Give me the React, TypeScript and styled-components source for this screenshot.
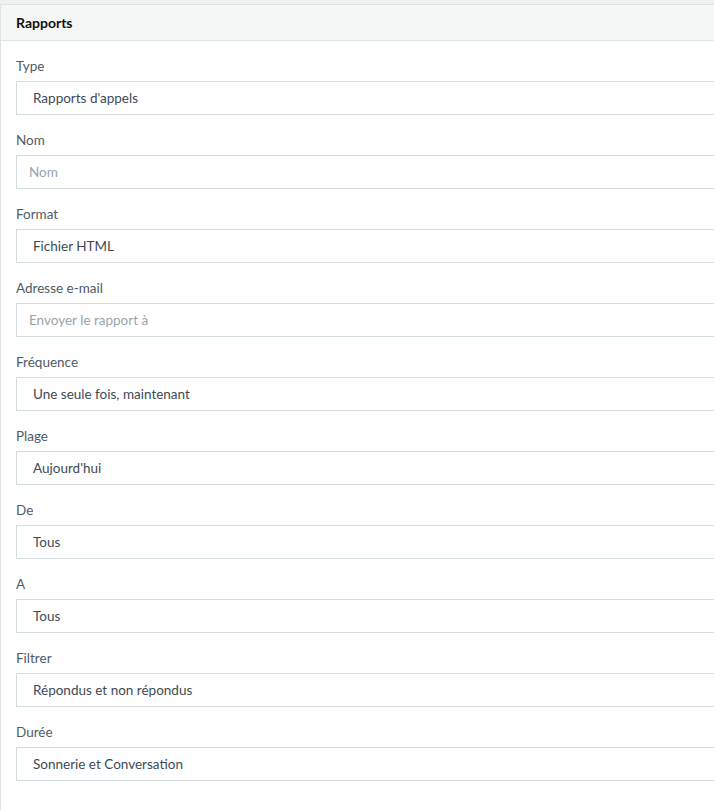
import React from "react";
import styled, { createGlobalStyle } from "styled-components";

const Global = createGlobalStyle`
  html, body { margin: 0; padding: 0; }
  body {
    background: #eef1f1;
    font-family: Lato, "Noto Sans", sans-serif;
    overflow: hidden;
  }
`;

const Page = styled.div`
  padding-top: 4px;
  width: 740px;
`;

const Panel = styled.section`
  background: #ffffff;
  border: 1px solid #dce3e3;
  border-right: none;
  min-height: 820px;
`;

const Header = styled.header`
  height: 35px;
  background: #f5f7f7;
  border-bottom: 1px solid #e0e6e6;
  display: flex;
  align-items: center;
  padding-left: 15px;
  font-size: 14px;
  font-weight: 700;
  color: #111;
`;

const Body = styled.div`
  padding: 15px 0 0 15px;
  display: flex;
  flex-direction: column;
  gap: 15px;
`;

const Field = styled.div`
  display: flex;
  flex-direction: column;
  gap: 5px;
`;

const Label = styled.label`
  font-size: 13.5px;
  line-height: 20px;
  color: #4f5b66;
`;

const Control = styled.div<{ $placeholder?: boolean }>`
  height: 34px;
  box-sizing: border-box;
  border: 1px solid #d3dcdf;
  background: #fff;
  display: flex;
  align-items: center;
  padding-left: ${(p) => (p.$placeholder ? "12px" : "16px")};
  font-size: 13.5px;
  color: ${(p) => (p.$placeholder ? "#9aa4ab" : "#3d4a55")};
`;

const fields: { label: string; value: string; placeholder?: boolean }[] = [
  { label: "Type", value: "Rapports d'appels" },
  { label: "Nom", value: "Nom", placeholder: true },
  { label: "Format", value: "Fichier HTML" },
  { label: "Adresse e-mail", value: "Envoyer le rapport à", placeholder: true },
  { label: "Fréquence", value: "Une seule fois, maintenant" },
  { label: "Plage", value: "Aujourd'hui" },
  { label: "De", value: "Tous" },
  { label: "A", value: "Tous" },
  { label: "Filtrer", value: "Répondus et non répondus" },
  { label: "Durée", value: "Sonnerie et Conversation" },
];

export default function App() {
  return (
    <>
      <Global />
      <Page>
        <Panel>
          <Header>Rapports</Header>
          <Body>
            {fields.map((f) => (
              <Field key={f.label}>
                <Label>{f.label}</Label>
                <Control $placeholder={f.placeholder}>{f.value}</Control>
              </Field>
            ))}
          </Body>
        </Panel>
      </Page>
    </>
  );
}
